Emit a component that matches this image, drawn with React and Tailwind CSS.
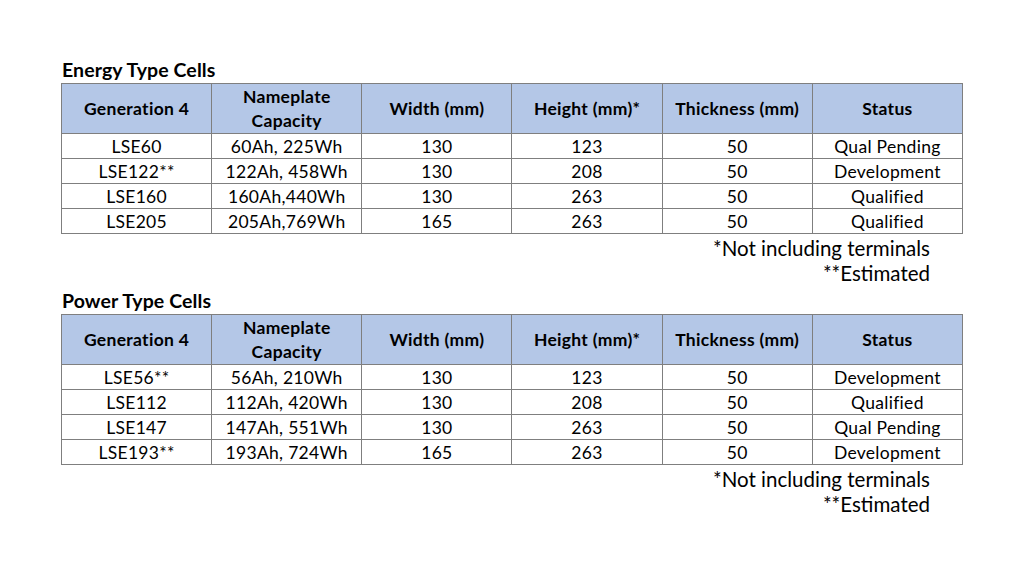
import React from "react";

const headers = [
  ["Generation 4"],
  ["Nameplate", "Capacity"],
  ["Width (mm)"],
  ["Height (mm)*"],
  ["Thickness (mm)"],
  ["Status"],
];

const energyRows = [
  ["LSE60", "60Ah, 225Wh", "130", "123", "50", "Qual Pending"],
  ["LSE122**", "122Ah, 458Wh", "130", "208", "50", "Development"],
  ["LSE160", "160Ah,440Wh", "130", "263", "50", "Qualified"],
  ["LSE205", "205Ah,769Wh", "165", "263", "50", "Qualified"],
];

const powerRows = [
  ["LSE56**", "56Ah, 210Wh", "130", "123", "50", "Development"],
  ["LSE112", "112Ah, 420Wh", "130", "208", "50", "Qualified"],
  ["LSE147", "147Ah, 551Wh", "130", "263", "50", "Qual Pending"],
  ["LSE193**", "193Ah, 724Wh", "165", "263", "50", "Development"],
];

const CellTable = ({ title, rows }) => {
  return (
    <section className="flex flex-col">
      <h2 className="h-[23px] pb-[4px] pl-[1px] text-[19.5px] leading-[19px] font-bold tracking-[0.1px] text-black">{title}</h2>
      <table className="border-collapse table-fixed w-[902px] text-black">
        <thead>
          <tr className="h-[50px] bg-[#b4c7e7]">
            {headers.map((h, i) => (
              <th
                key={i}
                className="w-[150px] border border-[#7f7f7f] px-1 text-[17.5px] leading-[24px] font-bold tracking-[0.3px] text-center align-middle"
              >
                {h.map((line, j) => (
                  <div key={j}>{line}</div>
                ))}
              </th>
            ))}
          </tr>
        </thead>
        <tbody>
          {rows.map((row, i) => (
            <tr key={i} className="h-[25px]">
              {row.map((cell, j) => (
                <td
                  key={j}
                  className="border border-[#7f7f7f] p-0 text-[17.5px] leading-[23px] tracking-[0.3px] text-center align-middle"
                >
                  {cell}
                </td>
              ))}
            </tr>
          ))}
        </tbody>
      </table>
      {/* footnotes */}
      <div className="w-[869px] flex flex-col items-end pt-[2px] text-[20.5px] leading-[25px] text-black">
        <p>*Not including terminals</p>
        <p>**Estimated</p>
      </div>
    </section>
  );
};

export default function App() {
  return (
    <main
      className="w-[1024px] h-[576px] bg-white pl-[61px] pt-[60px] flex flex-col gap-[5px]"
      style={{ fontFamily: "Lato, 'Open Sans', sans-serif" }}
    >
      <CellTable title="Energy Type Cells" rows={energyRows} />
      <CellTable title="Power Type Cells" rows={powerRows} />
    </main>
  );
}
